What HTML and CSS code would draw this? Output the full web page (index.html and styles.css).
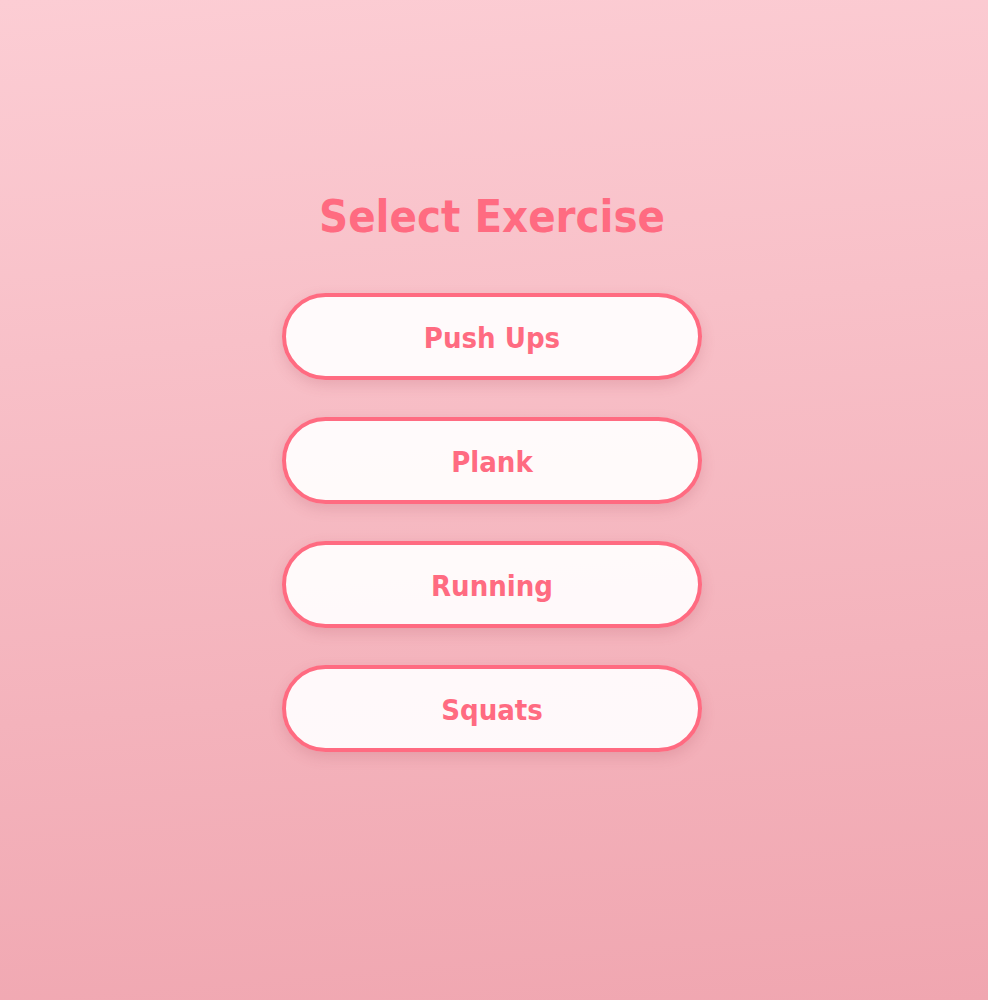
FILE: index.html
```html
<!DOCTYPE html>
<html>
<head>
<meta name="viewport" content="width=device-width, initial-scale=1.0">
<title>Select Exercise</title>
<link rel="stylesheet" href="styles.css">
</head>
<body>
<div id="container">
<h1>Select Exercise</h1>
<div class="exerciseList">
<a href="#" class="exercise">Push Ups</a>
<a href="#" class="exercise">Plank</a>
<a href="#" class="exercise">Running</a>
<a href="#" class="exercise">Squats</a>
</div>
</div>
</body>
</html>
```

FILE: styles.css
```css
html, body { margin: 0; padding: 0; }
body { min-height: 1000px; background: linear-gradient(175deg, #fccdd4 0%, #f0a6b0 100%); font-family: "DejaVu Sans Condensed", "DejaVu Sans", sans-serif; color: #ff6b81; }
#container { display: flex; flex-direction: column; align-items: center; padding: 190px 4px 0 0; }
h1 { margin: 0 0 49px 0; font-size: 45px; line-height: 54px; font-weight: bold; text-align: center; }
.exerciseList { display: flex; flex-direction: column; gap: 37px; }
.exercise {
  display: flex;
  align-items: center;
  justify-content: center;
  box-sizing: border-box;
  width: 420px;
  height: 87px;
  padding-top: 2px;
  border: 4px solid #ff6b81;
  border-radius: 44px;
  background-color: rgba(255, 255, 255, 0.92);
  box-shadow: 0 5px 14px rgba(160, 60, 80, 0.18);
  color: #ff6b81;
  font-size: 29px;
  font-weight: bold;
  text-decoration: none;
}
```
